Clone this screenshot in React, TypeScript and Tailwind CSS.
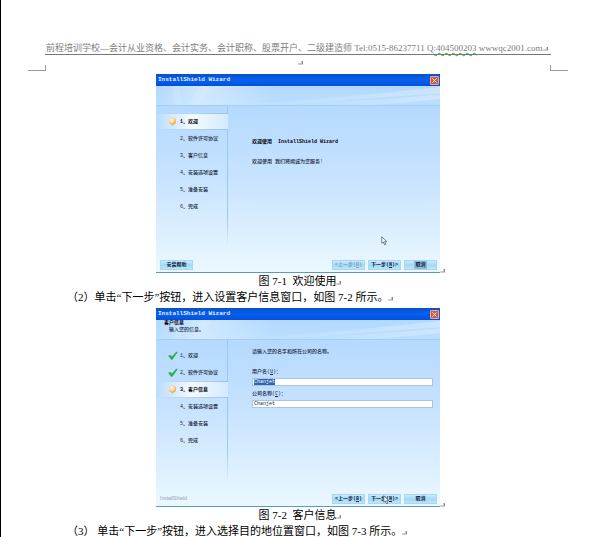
import React, { useEffect, useRef } from 'react';

const steps = ['欢迎', '软件许可协议', '客户信息', '安装选项设置', '准备安装', '完成'];

const docFont = "font-['Liberation_Serif','Noto_Sans_CJK_SC',serif]";
const wizardFont = "font-['Liberation_Mono','Noto_Sans_CJK_SC',monospace]";

function ParagraphMark() {
  return (
    <svg width="5" height="5" viewBox="0 0 5 5" className="inline-block shrink-0" aria-hidden="true">
      <path d="M0.5 4h1M2.3 4h0.9M4.2 1v3.5" stroke="#444" strokeWidth="0.9" fill="none" />
    </svg>
  );
}

function Cursor({ className }: { className: string }) {
  return (
    <svg width="7" height="10" viewBox="0 0 7 10" className={className} aria-hidden="true">
      <path
        d="M0.8 0.8V7.2L2.3 6L3.6 8.8L4.8 8.2L3.6 5.6H5.8Z"
        fill="#f4faff"
        stroke="#56616d"
        strokeWidth="0.8"
      />
    </svg>
  );
}

function StepIcon({ state }: { state: string }) {
  if (state === 'done') {
    return (
      <svg width="10" height="9" viewBox="0 0 10 9" aria-hidden="true">
        <path d="M0.6 4.8L2.5 4.2L3.8 6L8.6 0.8L9.2 1.4L4.2 8.4H3.2Z" fill="#21b53a" stroke="#149a2c" strokeWidth="0.4" />
      </svg>
    );
  }
  if (state === 'active') {
    return (
      <svg width="10" height="9" viewBox="0 0 10 9" aria-hidden="true">
        <defs>
          <radialGradient id="bulb" cx="0.4" cy="0.35" r="0.65">
            <stop offset="0" stopColor="#fff8dc" />
            <stop offset="0.6" stopColor="#fbd68a" />
            <stop offset="1" stopColor="#e2a54c" />
          </radialGradient>
        </defs>
        <circle cx="4.5" cy="4" r="3.5" fill="url(#bulb)" />
        <path d="M3 7h3l-0.6 1.4h-1.8z" fill="#c9bda6" />
      </svg>
    );
  }
  return <span className="w-[10px]" />;
}

function WizardButton({ children, disabled, focused }: { children: React.ReactNode; disabled?: boolean; focused?: boolean }) {
  return (
    <button
      type="button"
      disabled={disabled}
      className="flex h-[10px] w-[33px] items-center justify-center border border-[#a9d6f3] bg-linear-to-b from-[#c9eafd] via-[#a3d8f8] to-[#b9e6fc] text-[5px] leading-[8px] font-semibold whitespace-nowrap text-[#10233a] disabled:text-[#7fa3c0]"
    >
      <span className={focused ? 'bg-[#8fb9d6] px-[1px]' : ''}>{children}</span>
    </button>
  );
}

interface WizardProps {
  current: number;
  heading?: React.ReactNode;
  footerLeft: React.ReactNode;
  cursor: string;
  backDisabled?: boolean;
  cancelFocused?: boolean;
  children: React.ReactNode;
}

function Wizard({ current, heading, footerLeft, cursor, backDisabled, cancelFocused, children }: WizardProps) {
  return (
    <div className="relative mx-auto mt-[3px] w-full max-w-[284px]">
      <section
        className={`${wizardFont} border-b border-[#5f97c4] bg-linear-to-b from-[#acd5ff] via-[#c6e2ff] to-[#ebf8ff] text-[5px] leading-[8px] font-medium text-[#16263a]`}
      >
        <div className="flex h-[12px] items-center justify-between bg-linear-to-b from-[#0a50c8] via-[#0560f0] to-[#0450dc] pr-[1px] pl-[2px]">
          <h2 className="text-[6px] font-bold text-[#e6f0ff]">InstallShield Wizard</h2>
          <button
            type="button"
            aria-label="关闭"
            className="flex h-[9px] w-[9px] items-center justify-center rounded-[1px] border border-[#e9a79c] bg-[#d0594a]"
          >
            <svg width="5" height="5" viewBox="0 0 5 5" aria-hidden="true">
              <path d="M0.5 0.5L4.5 4.5M4.5 0.5L0.5 4.5" stroke="#fff" strokeWidth="1" />
            </svg>
          </button>
        </div>

        <div className="relative h-[20px] border-b border-[#a2cff2] bg-linear-to-b from-[#b4d9ff] to-[#b9deff]">
          <svg className="absolute inset-0 h-full w-full" viewBox="0 0 284 20" preserveAspectRatio="none" aria-hidden="true">
            <defs>
              <linearGradient id="glow" x1="0" x2="1">
                <stop offset="0" stopColor="#fff" stopOpacity="0" />
                <stop offset="0.4" stopColor="#fff" stopOpacity="0.35" />
                <stop offset="1" stopColor="#fff" stopOpacity="0" />
              </linearGradient>
              <linearGradient id="sweep" x1="0" x2="1">
                <stop offset="0" stopColor="#fff" stopOpacity="0" />
                <stop offset="1" stopColor="#fff" stopOpacity="0.3" />
              </linearGradient>
            </defs>
            <rect width="120" height="20" fill="url(#glow)" />
            <path d="M16 0H24L26 20H18ZM46 0H56L42 20H30Z" fill="#fff" opacity="0.1" />
            <path d="M70 20C150 16 220 8 284 1V8C220 12 170 17 130 20Z" fill="url(#sweep)" />
            <path d="M130 20C200 16 250 12 284 9V14L220 20Z" fill="url(#sweep)" />
          </svg>
          <div className="relative">{heading}</div>
        </div>

        <div className="flex h-[154px]">
          <ol className="flex w-[72px] shrink-0 flex-col">
            <li className="h-[7px] border-r border-[#9cc8ec]" aria-hidden="true" />
            {steps.map((step, i) => {
              const active = i === current;
              const state = active ? 'active' : i < current ? 'done' : 'todo';
              return (
                <li
                  key={step}
                  className={`h-[17px] whitespace-nowrap ${
                    active
                      ? 'bg-linear-to-r from-transparent via-[#b4d4f0] to-[#98c4e8] py-[1px] font-bold text-black'
                      : 'border-r border-[#9cc8ec]'
                  }`}
                >
                  <div
                    className={`flex h-full items-center gap-[2px] pl-3 ${
                      active ? 'bg-linear-to-r from-[#b9dcff] via-[#f4faff] to-[#d3eaff]' : ''
                    }`}
                  >
                    <StepIcon state={state} />
                    <span>
                      {i + 1}、{step}
                    </span>
                  </div>
                </li>
              );
            })}
            <li className="ml-auto h-[33px] w-[1px] bg-linear-to-b from-[#9cc8ec] to-transparent" aria-hidden="true" />
          </ol>
          <div className="min-w-0 flex-1 pr-[7px] pl-6">{children}</div>
        </div>

        <div className="flex h-[12px] items-start justify-between pr-[3px] pl-1">
          {footerLeft}
          <div className="flex gap-[3px]">
            <WizardButton disabled={backDisabled}>&lt;上一步(<u>B</u>)</WizardButton>
            <WizardButton>下一步(<u>N</u>)&gt;</WizardButton>
            <WizardButton focused={cancelFocused}>取消</WizardButton>
          </div>
        </div>
      </section>
      <Cursor className={cursor} />
      <span className="absolute bottom-0 left-full flex">
        <ParagraphMark />
      </span>
    </div>
  );
}

function Caption({ children }: { children: React.ReactNode }) {
  return (
    <p className="pl-1 text-center text-[11px] leading-[16px]">
      {children}
      <ParagraphMark />
    </p>
  );
}

function Paragraph({ children }: { children: React.ReactNode }) {
  return (
    <p className="pl-[22px] text-[11px] leading-[16px] whitespace-nowrap">
      {children}
      <ParagraphMark />
    </p>
  );
}

export default function App() {
  const userRef = useRef<HTMLInputElement>(null);

  useEffect(() => {
    userRef.current?.focus({ preventScroll: true });
    userRef.current?.select();
  }, []);

  const inputClass =
    'mt-[2px] block h-[8px] w-full border border-[#a8c8e0] bg-white px-[1px] text-[5px] leading-[6px] outline-none selection:bg-[#2f62b8] selection:text-white';

  return (
    <div className={`${docFont} h-screen overflow-hidden border-l border-black bg-white pr-[1px] text-black`}>
      <header className="px-[44px] pt-[42px]">
        <p className="border-b border-[#777] pl-[1px] text-[9px] leading-[12px] whitespace-nowrap text-[#7c7c7c]">
          前程培训学校—会计从业资格、会计实务、会计职称、股票开户、二级建造师 Tel:0515-86237711 Q
          <span className="underline decoration-[#3f9a3f] decoration-wavy decoration-1">:404500203</span>{' '}
          <a href="#">wwwqc2001.com</a>
          <ParagraphMark />
        </p>
        <div className="flex h-[10px] items-end justify-center pl-1">
          <ParagraphMark />
        </div>
      </header>
      <div className="flex h-[6px] justify-between px-[27px]" aria-hidden="true">
        <span className="w-[18px] border-r border-b border-[#999]" />
        <span className="w-[18px] border-b border-l border-[#999]" />
      </div>

      <main className="px-[44px]">
        <Wizard
          current={0}
          backDisabled
          cancelFocused
          cursor="absolute right-[52px] bottom-[27px]"
          footerLeft={<WizardButton>安装帮助</WizardButton>}
        >
          <p className="pt-8 font-bold whitespace-pre text-black">欢迎使用  InstallShield Wizard</p>
          <p className="pt-3">欢迎使用 我们将竭诚为您服务!</p>
        </Wizard>
        <Caption>图 7-1&nbsp; 欢迎使用</Caption>
        <Paragraph>（2）单击“下一步”按钮，进入设置客户信息窗口，如图 7-2 所示。</Paragraph>

        <Wizard
          current={2}
          cursor="absolute right-[50px] bottom-[2px]"
          heading={
            <div className="pl-2 leading-[7px]">
              <h3 className="font-bold text-black">客户信息</h3>
              <p className="pl-[5px]">输入您的信息。</p>
            </div>
          }
          footerLeft={<span className="font-['Liberation_Sans',sans-serif] text-[#8fa3b3]">InstallShield</span>}
        >
          <p className="pt-2">请输入您的名字和所在公司的名称。</p>
          <div className="pt-3">
            <label htmlFor="user" className="block">用户名(<u>U</u>)：</label>
            <input id="user" ref={userRef} defaultValue="Chanjet" className={inputClass} />
          </div>
          <div className="pt-1">
            <label htmlFor="company" className="block">公司名称(<u>C</u>)：</label>
            <input id="company" defaultValue="Chanjet" className={inputClass} />
          </div>
        </Wizard>
        <Caption>图 7-2&nbsp; 客户信息</Caption>
        <Paragraph>（3） 单击“下一步”按钮，进入选择目的地位置窗口，如图 7-3 所示。</Paragraph>
      </main>
    </div>
  );
}
